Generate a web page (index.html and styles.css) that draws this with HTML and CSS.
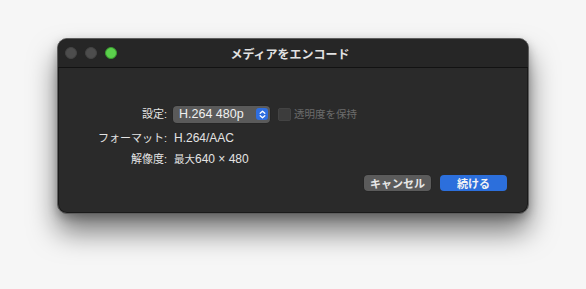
FILE: index.html
```html
<!DOCTYPE html>
<html lang="ja">
<head>
<meta charset="utf-8">
<link rel="stylesheet" href="styles.css">
</head>
<body>
<div class="page">
  <div class="window">
    <div class="titlebar">
      <div class="lights">
        <span class="light gray"></span>
        <span class="light gray"></span>
        <span class="light green"></span>
      </div>
      <div class="title">メディアをエンコード</div>
    </div>
    <div class="content">
      <div class="form">
        <div class="label">設定:</div>
        <div class="value row-first">
          <div class="popup">
            <span class="popup-text">H.264 480p</span>
            <span class="stepper">
              <svg width="11" height="11" viewBox="0 0 11 11"><path d="M3.2 4.3 L5.5 2.2 L7.8 4.3 M3.2 6.7 L5.5 8.8 L7.8 6.7" fill="none" stroke="#fff" stroke-width="1.3" stroke-linecap="round" stroke-linejoin="round"/></svg>
            </span>
          </div>
          <span class="check"></span>
          <span class="check-label">透明度を保持</span>
        </div>
        <div class="label">フォーマット:</div>
        <div class="value">H.264/AAC</div>
        <div class="label">解像度:</div>
        <div class="value"><span class="cjk">最大</span>640 × 480</div>
      </div>
      <div class="buttons">
        <button class="btn cancel">キャンセル</button>
        <button class="btn primary">続ける</button>
      </div>
    </div>
  </div>
</div>
</body>
</html>
```
FILE: styles.css
```css
html, body {
  margin: 0;
  padding: 0;
}
body {
  width: 586px;
  height: 289px;
  background: #f6f6f6;
  font-family: "Liberation Sans", "Noto Sans CJK JP", sans-serif;
  overflow: hidden;
}
.page {
  padding: 38px 0 0 57px;
}
.window {
  width: 470px;
  height: 174px;
  border: 1px solid #5e5e5e;
  border-radius: 10px;
  background: #2a2a2a;
  box-shadow: 0 0 0 1px #1a1a1a inset, 0 18px 28px rgba(0,0,0,0.5), 0 4px 10px rgba(0,0,0,0.25);
  overflow: hidden;
  display: flex;
  flex-direction: column;
}
.titlebar {
  height: 28px;
  background: #262626;
  border-bottom: 1px solid #121212;
  display: flex;
  align-items: center;
  position: relative;
}
.lights {
  display: flex;
  gap: 8px;
  padding-left: 7px;
}
.light {
  width: 12px;
  height: 12px;
  border-radius: 50%;
  box-sizing: border-box;
}
.light.gray {
  background: #4d4d4d;
  border: 1px solid #444;
}
.light.green {
  background: #5bd04c;
  border: 1px solid #3a9a30;
}
.title {
  position: absolute;
  left: 0;
  right: 0;
  top: 0;
  bottom: 0;
  display: flex;
  align-items: center;
  justify-content: center;
  color: #e2e2e2;
  font-size: 12px;
  font-weight: bold;
  padding-right: 6px;
}
.content {
  flex: 1;
  display: flex;
  flex-direction: column;
  padding: 37px 21px 0 0;
}
.form {
  display: grid;
  grid-template-columns: 109px auto;
  column-gap: 6px;
  row-gap: 0;
  align-items: center;
  color: #e4e4e4;
  font-size: 11px;
}
.label {
  text-align: right;
  height: 21px;
  line-height: 21px;
}
.form .label:first-child {
  height: 18px;
  line-height: 18px;
  margin-bottom: 5px;
}
.value {
  height: 21px;
  line-height: 21px;
  padding-left: 1px;
  font-size: 12px;
}
.value .cjk {
  font-size: 10.5px;
}
.value.row-first {
  height: 18px;
  line-height: 18px;
  padding-left: 0;
  margin-bottom: 5px;
  display: flex;
  align-items: center;
  font-size: 11px;
}
.popup {
  width: 97px;
  height: 17px;
  box-sizing: border-box;
  background: #5a5a5a;
  border-radius: 4px;
  box-shadow: 0 0 0 0.5px #222;
  display: flex;
  align-items: center;
  justify-content: space-between;
  padding: 0 2px 0 6px;
  color: #f0f0f0;
  font-size: 12.5px;
}
.stepper {
  width: 12px;
  height: 12px;
  border-radius: 3px;
  background: #2f6ee0;
  display: flex;
  align-items: center;
  justify-content: center;
}
.check {
  width: 13px;
  height: 13px;
  border-radius: 3px;
  background: #3c3c3c;
  margin-left: 8px;
  box-shadow: 0 0 0 0.5px #4a4a4a inset;
}
.check-label {
  margin-left: 3px;
  color: #6c6c6c;
  font-size: 10.5px;
}
.buttons {
  display: flex;
  justify-content: flex-end;
  gap: 9px;
  margin-top: 5px;
}
.btn {
  height: 16px;
  border: none;
  border-radius: 4px;
  font-family: "Liberation Sans", "Noto Sans CJK JP", sans-serif;
  font-size: 11px;
  font-weight: bold;
  color: #e8e8e8;
  padding: 0;
  display: flex;
  align-items: center;
  justify-content: center;
}
.btn.cancel {
  width: 67px;
  background: #5b5b5b;
  box-shadow: 0 0 0 0.5px #222;
}
.btn.primary {
  width: 67px;
  background: #2c6fdc;
  color: #f4f4f4;
}
```
